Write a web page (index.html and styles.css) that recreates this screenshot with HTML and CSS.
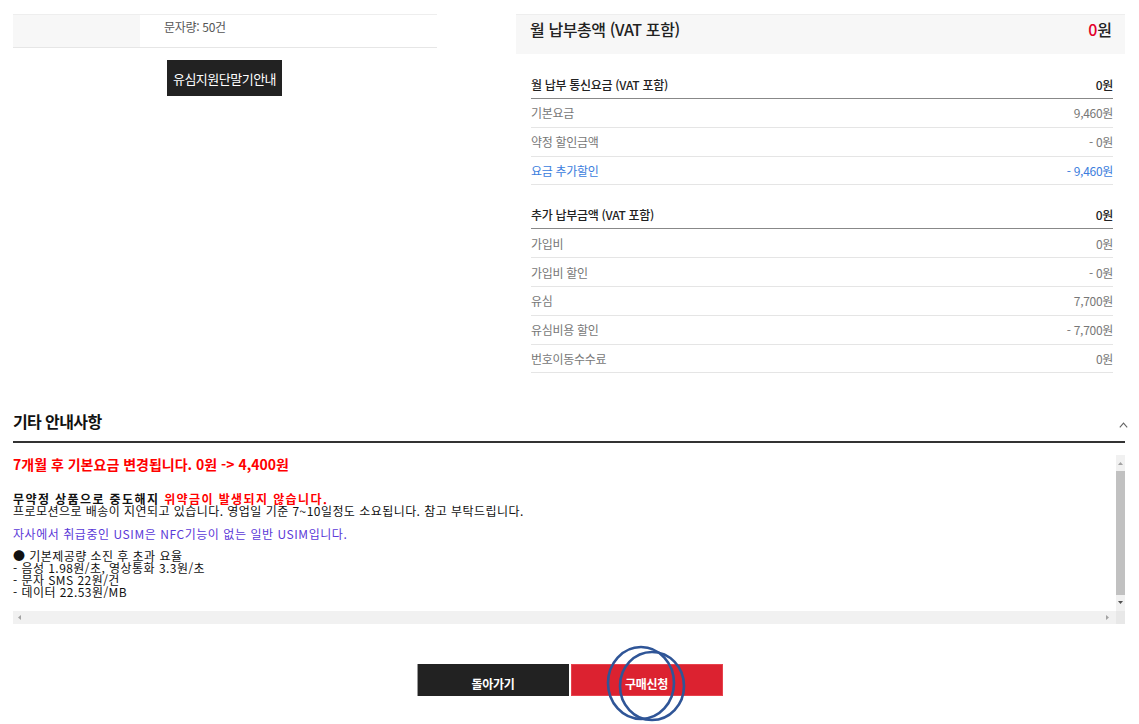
FILE: index.html
```html
<!DOCTYPE html>
<html lang="ko">
<head>
<meta charset="utf-8">
<title>요금 안내</title>
<link rel="stylesheet" href="styles.css">
</head>
<body>
<div class="page">
  <div class="top">
    <div class="left">
      <div class="spec-row">
        <div class="spec-label"></div>
        <div class="spec-value">문자량: 50건</div>
      </div>
      <div class="guide-wrap"><a class="guide-btn">유심지원단말기안내</a></div>
    </div>
    <div class="right">
      <div class="total">
        <span class="total-label">월 납부총액 (VAT 포함)</span>
        <span class="total-value"><em>0</em>원</span>
      </div>
      <div class="fee-table">
        <div class="fee-head"><span>월 납부 통신요금 (VAT 포함)</span><span>0원</span></div>
        <div class="fee-row"><span>기본요금</span><span>9,460원</span></div>
        <div class="fee-row"><span>약정 할인금액</span><span>- 0원</span></div>
        <div class="fee-row blue"><span>요금 추가할인</span><span>- 9,460원</span></div>
      </div>
      <div class="fee-table second">
        <div class="fee-head"><span>추가 납부금액 (VAT 포함)</span><span>0원</span></div>
        <div class="fee-row"><span>가입비</span><span>0원</span></div>
        <div class="fee-row"><span>가입비 할인</span><span>- 0원</span></div>
        <div class="fee-row"><span>유심</span><span>7,700원</span></div>
        <div class="fee-row"><span>유심비용 할인</span><span>- 7,700원</span></div>
        <div class="fee-row"><span>번호이동수수료</span><span>0원</span></div>
      </div>
    </div>
  </div>

  <div class="section-head">
    <h2>기타 안내사항</h2>
    <svg class="chev" width="9" height="6" viewBox="0 0 9 6"><path d="M0.8 5.4 L4.5 1.2 L8.2 5.4" fill="none" stroke="#666" stroke-width="1.1"/></svg>
  </div>

  <div class="notes">
    <div class="notes-content">
      <p class="headline">7개월 후 기본요금 변경됩니다. 0원 -&gt; 4,400원</p>
      <p class="para1"><b>무약정 상품으로 중도해지 </b><b class="red">위약금이 발생되지 않습니다.</b><br>프로모션으로 배송이 지연되고 있습니다. 영업일 기준 7~10일정도 소요됩니다. 참고 부탁드립니다.</p>
      <p class="purple">자사에서 취급중인 USIM은 NFC기능이 없는 일반 USIM입니다.</p>
      <p class="list">● 기본제공량 소진 후 초과 요율<br>- 음성 1.98원/초, 영상통화 3.3원/초<br>- 문자 SMS 22원/건<br>- 데이터 22.53원/MB</p>
    </div>
    <div class="vbar">
      <svg width="9" height="9" viewBox="0 0 9 9"><path d="M2 6 L4.5 3 L7 6 Z" fill="#a3a3a3"/></svg>
      <div class="vthumb"></div>
      <svg width="9" height="9" viewBox="0 0 9 9"><path d="M2 3 L4.5 6 L7 3 Z" fill="#505050"/></svg>
    </div>
    <div class="hbar">
      <svg width="9" height="9" viewBox="0 0 9 9"><path d="M6 2 L3 4.5 L6 7 Z" fill="#a3a3a3"/></svg>
      <svg width="9" height="9" viewBox="0 0 9 9"><path d="M3 2 L6 4.5 L3 7 Z" fill="#a3a3a3"/></svg>
    </div>
    <div class="corner"></div>
  </div>

  <div class="actions">
    <a class="btn back">돌아가기</a>
    <a class="btn buy">구매신청
      <svg class="circle-mark" width="90" height="84" viewBox="0 0 90 84">
        <ellipse cx="40" cy="41" rx="33" ry="36" fill="none" stroke="#2f5597" stroke-width="2.6"/>
        <ellipse cx="51" cy="44" rx="32" ry="34" fill="none" stroke="#2f5597" stroke-width="2.6"/>
      </svg>
    </a>
  </div>
</div>
</body>
</html>
```

FILE: styles.css
```css
* { box-sizing: border-box; }
html, body { margin: 0; padding: 0; background: #fff; }
body {
  font-family: "Noto Sans CJK KR", "Noto Sans", sans-serif;
  color: #333;
  min-height: 724px;
}
.page {
  width: 1139px;
  padding: 14px 14px 28px 13px;
}
.top {
  display: flex;
  gap: 79px;
  height: 376px;
}
.left {
  width: 424px;
}
.spec-row {
  display: flex;
  height: 34px;
  border-top: 1px solid #eeeeee;
  border-bottom: 1px solid #e6e6e6;
}
.spec-label {
  width: 127px;
  background: #f7f7f7;
}
.spec-value {
  padding-left: 24px;
  font-size: 12px;
  line-height: 24px;
  color: #555;
  letter-spacing: -0.3px;
}
.guide-wrap {
  padding: 12px 0 0 154px;
}
.guide-btn {
  display: inline-flex;
  align-items: center;
  justify-content: center;
  width: 115px;
  height: 36px;
  background: #222;
  color: #fff;
  font-size: 13px;
  letter-spacing: -0.5px;
}
.right {
  width: 609px;
}
.total {
  display: flex;
  justify-content: space-between;
  align-items: flex-start;
  height: 40px;
  padding: 4px 13px 0 14px;
  background: #f7f7f7;
  border-top: 1px solid #eeeeee;
  line-height: 20px;
}
.total-label {
  font-size: 16px;
  font-weight: 500;
  color: #222;
  letter-spacing: -0.4px;
}
.total-value {
  font-size: 16px;
  font-weight: 500;
  color: #222;
}
.total-value em {
  font-style: normal;
  color: #e4002b;
}
.fee-table {
  margin: 16px 12px 0 15px;
}
.fee-table.second {
  margin-top: 15px;
}
.fee-head, .fee-row {
  display: flex;
  justify-content: space-between;
  align-items: center;
  font-size: 12px;
  letter-spacing: -0.3px;
}
.fee-head {
  height: 29px;
  color: #222;
  font-weight: 500;
  border-bottom: 1px solid #888;
}
.fee-row {
  height: 28.8px;
  color: #777;
  border-bottom: 1px solid #e5e5e5;
}
.fee-row.blue { color: #3b7ddd; }

.section-head {
  display: flex;
  justify-content: space-between;
  align-items: center;
  height: 53px;
  border-bottom: 2px solid #333;
}
.section-head h2 {
  margin: 0;
  font-size: 16px;
  font-weight: bold;
  color: #111;
  letter-spacing: -0.6px;
  margin-top: 11px;
}
.chev { margin-top: 18px; margin-right: -3px; }

.notes {
  display: grid;
  grid-template-columns: 1fr 9px;
  grid-template-rows: 156px 13px;
  margin-top: 12px;
  width: 1112px;
}
.notes-content {
  overflow: hidden;
  font-family: "Noto Sans CJK KR", sans-serif;
  font-size: 12px;
  color: #111;
  letter-spacing: 0.45px;
}
.notes-content p { margin: 0; }
.headline {
  font-size: 14px;
  font-weight: bold;
  line-height: 18px;
  color: #ff0000;
  letter-spacing: 0;
}
.para1 {
  margin-top: 20px !important;
  line-height: 12px;
}
.para1 b { font-weight: bold; letter-spacing: 1.4px; }
.para1 .red { color: #ff0000; }
.purple {
  margin-top: 11px !important;
  line-height: 12px;
  color: #5b39d8;
  letter-spacing: 0.55px;
}
.list {
  margin-top: 10px !important;
  line-height: 12px;
}
.vbar {
  background: #f1f1f1;
  display: flex;
  flex-direction: column;
  align-items: center;
  padding: 4px 0 4px;
}
.vthumb {
  flex: 1;
  width: 9px;
  margin: 3px 0 3px;
  background: #c1c1c1;
}
.hbar {
  background: #f1f1f1;
  display: flex;
  justify-content: space-between;
  align-items: center;
  padding: 0 4px 0 2px;
}
.corner { background: #e8e8e8; }

.actions {
  display: flex;
  justify-content: center;
  gap: 2px;
  margin-top: 40px;
  margin-left: -13px;
  margin-right: -14px;
}
.btn {
  position: relative;
  display: inline-flex;
  align-items: center;
  justify-content: center;
  height: 32px;
  padding-top: 7px;
  color: #fff;
  font-size: 12px;
  font-weight: bold;
  letter-spacing: -0.3px;
}
.btn.back {
  width: 152px;
  background: #222;
  border-left: 1px solid #9a9a9a;
}
.btn.buy {
  width: 152px;
  background: #dc2230;
  border: 1px solid #e7424c;
}
.circle-mark {
  position: absolute;
  left: 29px;
  top: -23px;
  pointer-events: none;
}
```
